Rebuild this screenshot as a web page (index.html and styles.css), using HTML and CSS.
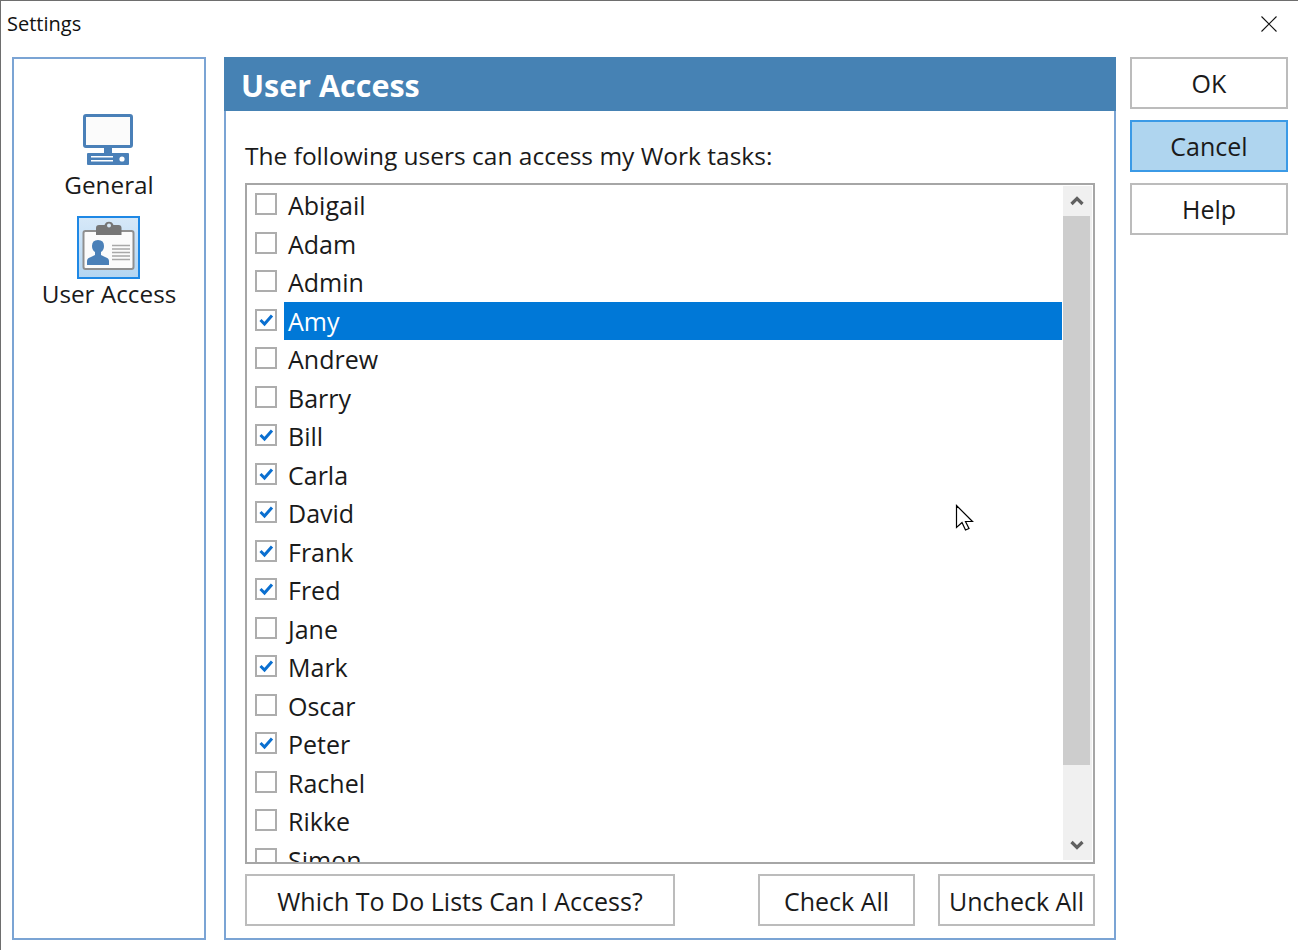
FILE: index.html
```html
<!DOCTYPE html>
<html lang="en">
<head>
  <meta charset="UTF-8">
  <title>Settings</title>
  <link rel="stylesheet" href="styles.css">
</head>
<body>
  <div class="window">
    <div class="titlebar">
      <span class="title">Settings</span>
      <svg class="close" width="18" height="18" viewBox="0 0 18 18"><path d="M1.500 1.500l15 15M16.500 1.500l-15 15" stroke="#111" stroke-width="1.100" fill="none"/></svg>
    </div>
    <div class="content">
      <div class="sidebar">
        <div class="nav-item nav-general">
          <svg class="nav-icon" width="50" height="52" viewBox="0 0 50 52">
            <rect x="1.500" y="1.500" width="47" height="31" rx="1.500" fill="#fbfbfb" stroke="#4a80b8" stroke-width="3"/>
            <rect x="21" y="34" width="8" height="6" fill="#4a80b8"/>
            <rect x="4" y="39" width="42" height="12" rx="1" fill="#4a80b8"/>
            <rect x="8" y="42" width="22" height="1.500" fill="#fff"/>
            <rect x="8" y="46" width="22" height="1.500" fill="#fff"/>
            <circle cx="39" cy="45" r="2.600" fill="#fff"/>
          </svg>
          <span class="nav-label">General</span>
        </div>
        <div class="nav-item nav-access">
          <div class="nav-selected">
            <svg width="59" height="59" viewBox="0 0 59 59">
              <rect x="4.500" y="13" width="50" height="38" rx="2" fill="#fbfbfb" stroke="#8f8f8f" stroke-width="2"/>
              <path d="M17 17v-7q0-3 3-3h5.500a4.700 4.700 0 0 1 9 0h5q3 0 3 3v7z" fill="#767676"/>
              <circle cx="30" cy="7.500" r="2" fill="#d8e8f6"/>
              <path d="M8 47v-4q0-3 4-4l4-2v-3q-3-2-3-6 0-6 6-6t6 6q0 4-3 6v3l4 2q4 1 4 4v4z" fill="#4a80b8"/>
              <path d="M33 27.500h18M33 31h18M33 34.500h18M33 38h18M33 41.500h18" stroke="#a8a8a8" stroke-width="1.500"/>
            </svg>
          </div>
          <span class="nav-label">User Access</span>
        </div>
      </div>

      <div class="panel">
        <div class="panel-header">User Access</div>
        <div class="panel-body">
          <p class="intro">The following users can access my Work tasks:</p>
          <div class="list-box">
            <div class="rows">
              <div class="row"><span class="check"></span><span class="name">Abigail</span></div>
              <div class="row"><span class="check"></span><span class="name">Adam</span></div>
              <div class="row"><span class="check"></span><span class="name">Admin</span></div>
              <div class="row selected"><span class="check"><svg width="18" height="18" viewBox="0 0 18 18"><path d="M3.500 9l4 4 7.500-8.500" fill="none" stroke="#0a6fd0" stroke-width="3"/></svg></span><span class="name">Amy</span></div>
              <div class="row"><span class="check"></span><span class="name">Andrew</span></div>
              <div class="row"><span class="check"></span><span class="name">Barry</span></div>
              <div class="row"><span class="check"><svg width="18" height="18" viewBox="0 0 18 18"><path d="M3.500 9l4 4 7.500-8.500" fill="none" stroke="#0a6fd0" stroke-width="3"/></svg></span><span class="name">Bill</span></div>
              <div class="row"><span class="check"><svg width="18" height="18" viewBox="0 0 18 18"><path d="M3.500 9l4 4 7.500-8.500" fill="none" stroke="#0a6fd0" stroke-width="3"/></svg></span><span class="name">Carla</span></div>
              <div class="row"><span class="check"><svg width="18" height="18" viewBox="0 0 18 18"><path d="M3.500 9l4 4 7.500-8.500" fill="none" stroke="#0a6fd0" stroke-width="3"/></svg></span><span class="name">David</span></div>
              <div class="row"><span class="check"><svg width="18" height="18" viewBox="0 0 18 18"><path d="M3.500 9l4 4 7.500-8.500" fill="none" stroke="#0a6fd0" stroke-width="3"/></svg></span><span class="name">Frank</span></div>
              <div class="row"><span class="check"><svg width="18" height="18" viewBox="0 0 18 18"><path d="M3.500 9l4 4 7.500-8.500" fill="none" stroke="#0a6fd0" stroke-width="3"/></svg></span><span class="name">Fred</span></div>
              <div class="row"><span class="check"></span><span class="name">Jane</span></div>
              <div class="row"><span class="check"><svg width="18" height="18" viewBox="0 0 18 18"><path d="M3.500 9l4 4 7.500-8.500" fill="none" stroke="#0a6fd0" stroke-width="3"/></svg></span><span class="name">Mark</span></div>
              <div class="row"><span class="check"></span><span class="name">Oscar</span></div>
              <div class="row"><span class="check"><svg width="18" height="18" viewBox="0 0 18 18"><path d="M3.500 9l4 4 7.500-8.500" fill="none" stroke="#0a6fd0" stroke-width="3"/></svg></span><span class="name">Peter</span></div>
              <div class="row"><span class="check"></span><span class="name">Rachel</span></div>
              <div class="row"><span class="check"></span><span class="name">Rikke</span></div>
              <div class="row"><span class="check"></span><span class="name">Simon</span></div>
            </div>
            <div class="scrollbar">
              <div class="arrow"><svg width="16" height="12" viewBox="0 0 16 12"><path d="M2.500 9l5.500-5.500 5.500 5.500" fill="none" stroke="#606060" stroke-width="3.200"/></svg></div>
              <div class="thumb"></div>
              <div class="track"></div>
              <div class="arrow"><svg width="16" height="12" viewBox="0 0 16 12"><path d="M2.500 3l5.500 5.500 5.500-5.500" fill="none" stroke="#606060" stroke-width="3.200"/></svg></div>
            </div>
          </div>
          <div class="list-actions">
            <button class="btn btn-which">Which To Do Lists Can I Access?</button>
            <button class="btn btn-check">Check All</button>
            <button class="btn btn-uncheck">Uncheck All</button>
          </div>
        </div>
      </div>

      <div class="side-buttons">
        <button class="btn">OK</button>
        <button class="btn btn-active">Cancel</button>
        <button class="btn">Help</button>
      </div>
    </div>
    <svg class="cursor" width="20" height="30" viewBox="0 0 20 30"><path d="M1.500 1.500v22l5.500-5 3.500 7.500 3.500-1.500-3.500-7h7z" fill="#fff" stroke="#000" stroke-width="1.200"/></svg>
  </div>
</body>
</html>
```

FILE: styles.css
```css
* {
  box-sizing: border-box;
}
html, body {
  margin: 0;
  height: 100%;
  background: white;
}
body {
  font-family: "Open Sans", "Noto Sans", sans-serif;
  font-size: 25px;
  color: #1a1a1a;
}
.window {
  position: relative;
  width: 1298px;
  height: 950px;
  border-top: 1px solid #6e6e6e;
  border-left: 1px solid #6e6e6e;
  display: flex;
  flex-direction: column;
  overflow: hidden;
}
.titlebar {
  height: 56px;
  flex: none;
  display: flex;
  justify-content: space-between;
  align-items: center;
  padding: 0 20px 11px 6px;
}
.title {
  font-size: 20px;
  color: #111;
}
.content {
  display: flex;
  padding-left: 11px;
}

/* left nav */
.sidebar {
  width: 194px;
  height: 883px;
  flex: none;
  border: 2px solid #7ba4d4;
  padding-top: 55px;
  display: flex;
  flex-direction: column;
  align-items: center;
}
.nav-item {
  display: flex;
  flex-direction: column;
  align-items: center;
}
.nav-icon {
  display: block;
  margin-right: 2px;
}
.nav-label {
  font-size: 24.3px;
  line-height: 34px;
  margin-top: 2px;
  white-space: nowrap;
}
.nav-access {
  margin-top: 14px;
}
.nav-access .nav-label {
  margin-top: -2px;
}
.nav-selected {
  width: 63px;
  height: 63px;
  margin-right: 2px;
  background: linear-gradient(#d6e8f8, #b4d6f2);
  border: 2px solid #1e88e5;
  display: flex;
  align-items: center;
  justify-content: center;
}

/* main panel */
.panel {
  width: 892px;
  height: 883px;
  flex: none;
  margin-left: 18px;
  border: 2px solid #7ba4d4;
  border-top: none;
  display: flex;
  flex-direction: column;
}
.panel-header {
  height: 54px;
  flex: none;
  margin: 0 -2px;
  background: #4682b4;
  color: white;
  font-size: 30.500px;
  font-weight: 700;
  padding-left: 17px;
  line-height: 56px;
}
.panel-body {
  padding: 0 19px;
}
.intro {
  margin: 0;
  height: 72px;
  padding-top: 27px;
  font-size: 24.500px;
  line-height: 36px;
}
.list-box {
  height: 681px;
  border: 2px solid #a6a6a6;
  display: flex;
  overflow: hidden;
}
.rows {
  width: 815px;
  flex: none;
  padding-top: 1px;
  height: 677px;
  overflow: hidden;
}
.row {
  height: 38.500px;
  display: flex;
  align-items: center;
  padding-left: 8px;
}
.check {
  width: 22px;
  height: 22px;
  flex: none;
  border: 2px solid #adadad;
  background: white;
  margin-top: -2px;
}
.check svg {
  display: block;
}
.name {
  flex: 1;
  margin-left: 7px;
  padding-left: 4px;
  line-height: 38.500px;
  height: 38.500px;
}
.selected .name {
  background: #0078d7;
  color: white;
}
.scrollbar {
  width: 29px;
  flex: none;
  height: 674px;
  margin: 1px 0 0 1px;
  background: #f0f0f0;
  display: flex;
  flex-direction: column;
}
.arrow {
  height: 30px;
  flex: none;
  padding-right: 2px;
  display: flex;
  align-items: center;
  justify-content: center;
}
.thumb {
  height: 549px;
  width: 27px;
  flex: none;
  background: #cdcdcd;
}
.track {
  flex: 1;
}
.list-actions {
  display: flex;
  margin-top: 10px;
}
.list-actions .btn {
  padding-top: 2px;
}

/* buttons */
.btn {
  font-family: inherit;
  font-size: 25px;
  color: #1a1a1a;
  height: 52px;
  background: white;
  border: 2px solid #bcbcbc;
  padding: 0;
  white-space: nowrap;
}
.btn-which {
  width: 430px;
}
.btn-check {
  width: 157px;
  margin-left: 83px;
}
.btn-uncheck {
  width: 157px;
  margin-left: 23px;
}
.side-buttons {
  width: 158px;
  flex: none;
  margin-left: 14px;
  display: flex;
  flex-direction: column;
  gap: 11px;
}
.btn-active {
  background: #afd5ef;
  border-color: #3b9ae6;
}
.cursor {
  position: absolute;
  left: 954px;
  top: 503px;
}
```
